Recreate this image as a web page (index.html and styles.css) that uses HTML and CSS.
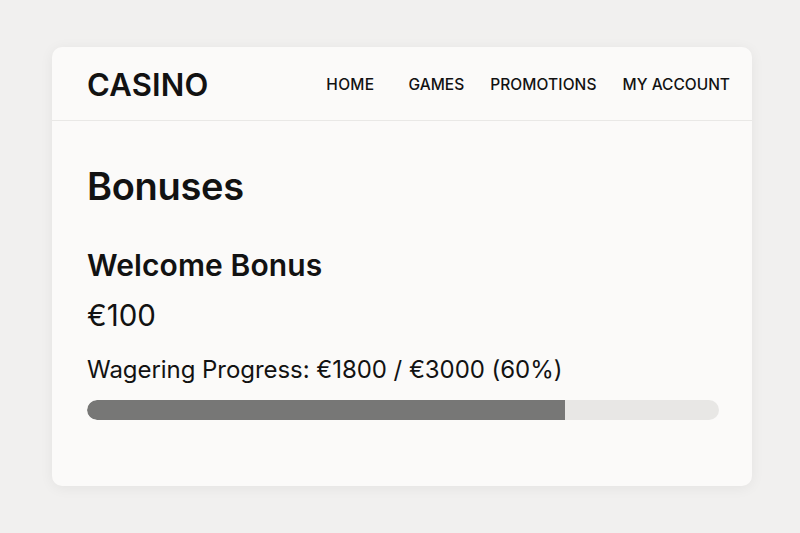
FILE: index.html
```html
<!DOCTYPE html>
<html>
<head>
<meta charset="utf-8">
<link rel="stylesheet" href="styles.css">
</head>
<body>
<div class="card">
  <header class="header">
    <div class="logo">CASINO</div>
    <nav class="nav">
      <a class="nav-home">HOME</a>
      <a class="nav-games">GAMES</a>
      <a class="nav-promo">PROMOTIONS</a>
      <a>MY ACCOUNT</a>
    </nav>
  </header>
  <main class="content">
    <h1 class="title">Bonuses</h1>
    <h2 class="bonus-name">Welcome Bonus</h2>
    <div class="amount">€100</div>
    <div class="progress-label">Wagering Progress: €1800 / €3000 (60%)</div>
    <div class="track"><div class="fill" style="width: 75.6%"></div></div>
  </main>
</div>
</body>
</html>
```

FILE: styles.css
```css
* { box-sizing: border-box; }
html, body { margin: 0; padding: 0; }
body {
  width: 800px;
  height: 533px;
  background: #f1f0ef;
  font-family: Inter, "Liberation Sans", sans-serif;
  color: #121212;
  padding: 47px 48px 0 52px;
}
.card {
  background: #fbfaf9;
  border-radius: 10px;
  height: 439px;
  box-shadow: 0 2px 14px rgba(0,0,0,0.06);
}
.header {
  height: 74px;
  border-bottom: 1px solid #e9e8e6;
  display: flex;
  align-items: center;
  justify-content: space-between;
  padding: 0 22px 0 35px;
}
.logo {
  font-size: 31px;
  font-weight: 600;
  letter-spacing: 0.2px;
  margin-top: 2px;
}
.nav {
  display: flex;
  gap: 26px;
  font-size: 15.5px;
  font-weight: 500;
  margin-top: 1px;
}
.nav-home { margin-right: 8px; letter-spacing: 0.3px; }
.nav-promo { letter-spacing: 0.1px; }
.nav a { color: #121212; }
.content {
  padding: 0 33px 0 35px;
}
.title {
  margin: 42px 0 0;
  font-size: 38px;
  font-weight: 600;
  line-height: 46px;
  letter-spacing: -0.3px;
}
.bonus-name {
  margin: 38px 0 0;
  font-size: 30px;
  font-weight: 600;
  line-height: 36px;
  letter-spacing: 0.1px;
}
.amount {
  margin-top: 14px;
  font-size: 29.5px;
  line-height: 36px;
}
.progress-label {
  margin-top: 22px;
  font-size: 24px;
  line-height: 30px;
  letter-spacing: -0.05px;
}
.track {
  margin-top: 15px;
  height: 20px;
  background: #e8e7e5;
  border-radius: 10px;
  overflow: hidden;
}
.fill {
  height: 100%;
  background: #777776;
  border-radius: 10px 0 0 10px;
}
```
